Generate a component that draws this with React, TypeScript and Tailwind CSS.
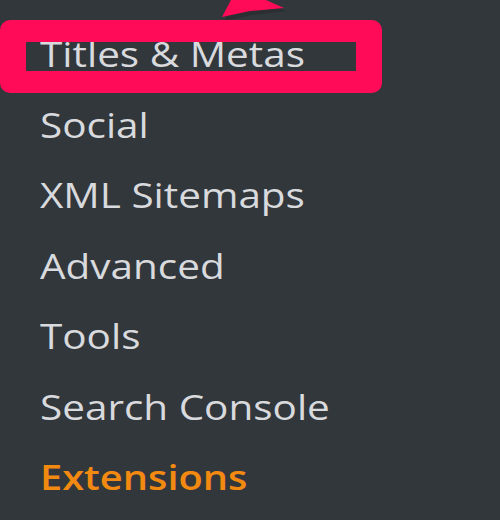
import React from "react";

const items = [
  "Titles & Metas",
  "Social",
  "XML Sitemaps",
  "Advanced",
  "Tools",
  "Search Console",
];

export default function App() {
  return (
    <div
      className="relative w-[500px] h-[520px] overflow-hidden bg-[#32373c]"
      style={{ fontFamily: '"Open Sans", "Noto Sans", sans-serif' }}
    >
      <svg
        className="absolute left-0 top-0"
        width="500"
        height="30"
        viewBox="0 0 500 30"
      >
        <polygon points="222,18 231,0 266,0 284,8 250,12" fill="#26292c" opacity="0.6" transform="translate(2,3)" />
        <polygon points="222,17 231,0 266,0 284,8 250,11" fill="#ff0b57" />
      </svg>
      <div className="flex flex-col pt-[19px]">
        {items.map((t) => (
          <div
            key={t}
            className="h-[70.5px] flex items-center pl-[40px] text-[34px] leading-none text-[#d8dadd] font-medium"
          >
            <span className="inline-block origin-left scale-x-[1.19] whitespace-nowrap">{t}</span>
          </div>
        ))}
        <div className="h-[70.5px] flex items-center pl-[40px] text-[34px] leading-none text-[#f28a12] font-semibold">
          <span className="inline-block origin-left scale-x-[1.17] whitespace-nowrap">Extensions</span>
        </div>
      </div>
      <div className="absolute left-0 top-[20px] w-[382px] h-[73px] rounded-[10px] border-x-[26px] border-y-[22px] border-[#ff0b57]" />
    </div>
  );
}
